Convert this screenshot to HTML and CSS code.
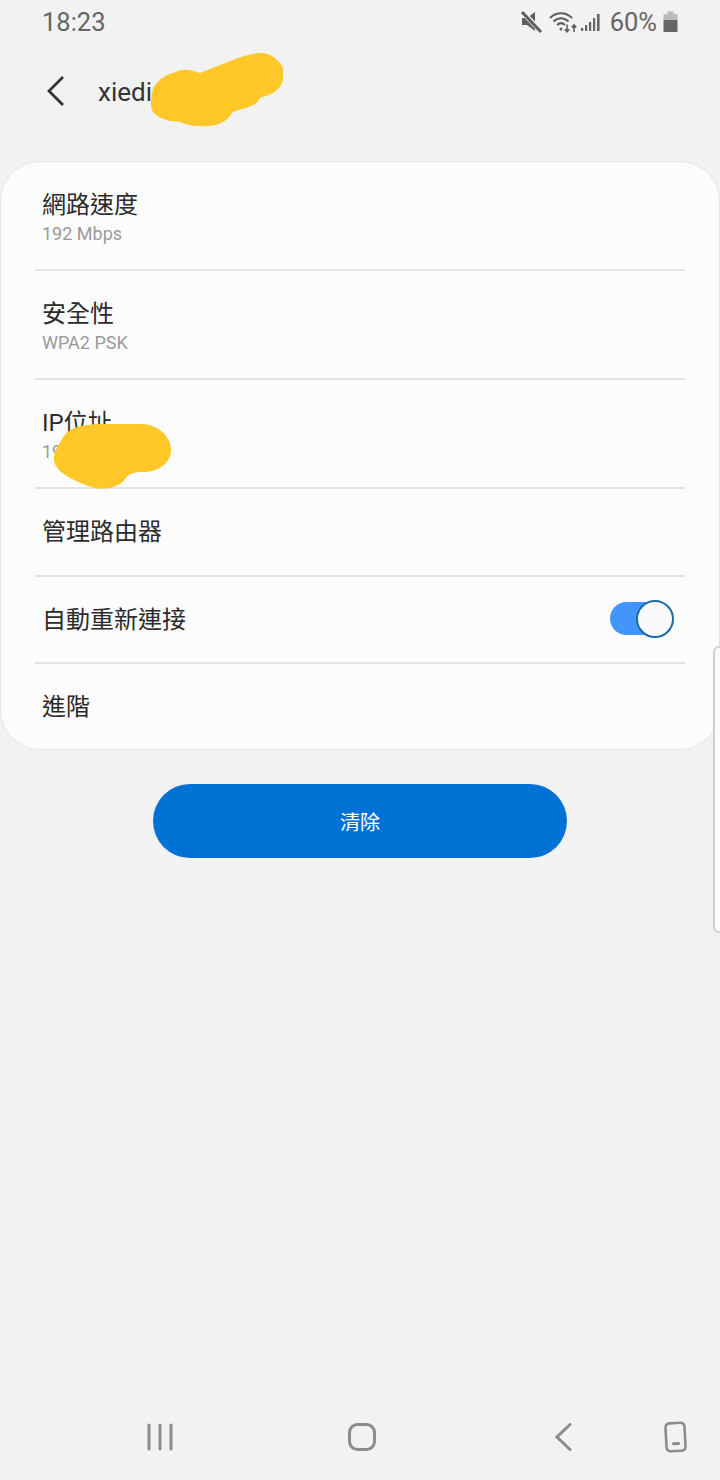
FILE: index.html
```html
<!DOCTYPE html>
<html lang="zh-Hant">
<head>
  <meta charset="UTF-8">
  <meta name="viewport" content="width=device-width, initial-scale=1.0">
  <title>Wi-Fi</title>
  <link rel="stylesheet" href="styles.css">
</head>
<body>
  <div class="phone">
    <div class="status-bar">
      <span class="clock">18:23</span>
      <div class="status-icons">
        <svg class="icon-mute" width="23" height="22" viewBox="0 0 23 22">
          <path d="M2 7h5l8-6v19l-8-6H2z" fill="#5f5f5f"/>
          <path d="M3 1.500l18 19" stroke="#f2f2f2" stroke-width="5"/>
          <path d="M2 1l19 20" stroke="#5f5f5f" stroke-width="3"/>
        </svg>
        <svg class="icon-wifi" width="29" height="24" viewBox="0 0 29 24" fill="none" stroke="#5f5f5f" stroke-width="2">
          <path d="M1 8C7 1.500 17 1.500 23 8"/>
          <path d="M4.500 11.500C9 7 15 7 19.500 11.500"/>
          <path d="M8 15c2.400-2.300 5.600-2.300 8 0"/>
          <path d="M18 14.500v7M15.800 19.300l2.200 2.400 2.200-2.400M25 22v-7M22.800 17.400l2.200-2.400 2.200 2.400" stroke-width="1.600"/>
          <circle cx="12" cy="19" r="1.500" fill="#5f5f5f" stroke="none"/>
        </svg>
        <svg class="icon-signal" width="20" height="20" viewBox="0 0 20 20" fill="#666">
          <rect x="0" y="16" width="2.200" height="3"/>
          <rect x="4" y="13" width="2.200" height="6"/>
          <rect x="8" y="10" width="2.200" height="9"/>
          <rect x="12" y="6" width="2.200" height="13"/>
          <rect x="16" y="2" width="2.600" height="17"/>
        </svg>
        <span class="battery-text">60%</span>
        <svg class="icon-battery" width="15" height="22" viewBox="0 0 15 22">
          <rect x="4.500" y="0.500" width="6" height="3" fill="#bbb"/>
          <rect x="0.500" y="3" width="14" height="6" fill="#bbb"/>
          <rect x="0.500" y="9" width="14" height="12" fill="#666"/>
        </svg>
      </div>
    </div>

    <div class="title-bar">
      <svg class="back-arrow" width="20" height="32" viewBox="0 0 20 32" fill="none">
        <path d="M17 2L3 16l14 14" stroke="#333" stroke-width="2.800"/>
      </svg>
      <span class="network-name">xiedin</span>
    </div>

    <div class="card">
      <div class="row row-tall">
        <div class="row-title">網路速度</div>
        <div class="row-sub">192 Mbps</div>
      </div>
      <div class="row row-tall">
        <div class="row-title">安全性</div>
        <div class="row-sub">WPA2 PSK</div>
      </div>
      <div class="row row-tall">
        <div class="row-title">IP位址</div>
        <div class="row-sub">19</div>
      </div>
      <div class="row">
        <div class="row-title">管理路由器</div>
      </div>
      <div class="row row-switch">
        <div class="row-title">自動重新連接</div>
        <div class="switch"><div class="knob"></div></div>
      </div>
      <div class="row row-last">
        <div class="row-title">進階</div>
      </div>
    </div>

    <div class="button-wrap">
      <button type="button" class="clear-btn">清除</button>
    </div>

    <div class="nav-bar">
      <svg width="28" height="28" viewBox="0 0 28 28" stroke="#8c8c8c" stroke-width="3" stroke-linecap="round">
        <path d="M3 2v24M14 2v24M25 2v24"/>
      </svg>
      <svg width="28" height="28" viewBox="0 0 28 28" fill="none" stroke="#8c8c8c" stroke-width="3">
        <rect x="1.500" y="1.500" width="25" height="25" rx="8"/>
      </svg>
      <svg width="18" height="28" viewBox="0 0 18 28" fill="none" stroke="#8c8c8c" stroke-width="3" stroke-linecap="round">
        <path d="M15 1.500L2 14l13 12.500"/>
      </svg>
      <svg width="24" height="32" viewBox="0 0 24 32" fill="none" stroke="#8c8c8c" stroke-width="2.600">
        <rect x="2" y="2" width="19" height="28" rx="4" transform="rotate(-3 12 16)"/>
        <path d="M9.500 22.800l5-.3" stroke-width="3" stroke-linecap="round"/>
      </svg>
    </div>

    <!-- scribbles drawn over the private details -->
    <svg class="scribble scribble-name" width="135" height="78" viewBox="0 0 135 78">
      <path d="M1 52C1 42 3 36 7 32 12 26 18 23 23 22 29 19 33 18 37 19 42 19 46 21 50 22L83 9C92 5 101 3 110 2 118 2 123 5 127 9 132 13 134 18 133 22 134 30 131 36 127 39 121 44 115 45 110 47 108 51 106 53 103 54 96 58 89 58 83 61 79 66 77 69 73 71 66 75 57 76 50 75 41 75 35 73 30 71 25 70 21 71 17 69 10 67 5 64 3 61 1 58 1 55 1 52Z" fill="#ffc727"/>
    </svg>
    <svg class="scribble scribble-ip" width="120" height="70" viewBox="0 0 120 70">
      <path d="M1 38C0 30 6 22 11 14 18 4 34 2 50 2H88C104 2 118 14 118 28 118 42 104 50 90 50 82 50 76 51 72 57 66 66 50 68 42 66 28 62 16 56 8 50 4 46 1 42 1 38Z" fill="#ffc727"/>
    </svg>

    <div class="side-handle"></div>
  </div>
</body>
</html>
```

FILE: styles.css
```css
/* General Reset */
* {
  box-sizing: border-box;
  margin: 0;
  padding: 0;
}

body {
  font-family: Roboto, "Noto Sans CJK TC", sans-serif;
  background-color: #f2f2f2;
}

.phone {
  position: relative;
  width: 720px;
  height: 1480px;
  overflow: hidden;
  display: flex;
  flex-direction: column;
  background-color: #f2f2f2;
}

.status-bar {
  height: 44px;
  padding: 0 42px 0 42px;
  display: flex;
  justify-content: space-between;
  align-items: center;
  color: #666;
}

.clock {
  font-size: 25.500px;
}

.status-icons {
  display: flex;
  align-items: center;
}

.icon-mute {
  margin-right: 6px;
}

.icon-wifi {
  margin-right: 3px;
}

.icon-signal {
  margin-right: 9px;
}

.battery-text {
  font-size: 25.500px;
  margin-right: 6px;
}

.title-bar {
  height: 117px;
  display: flex;
  align-items: flex-start;
}

.back-arrow {
  margin: 31px 0 0 46px;
}

.network-name {
  margin: 31px 0 0 32px;
  font-size: 26px;
  line-height: 34px;
  color: #333;
}

.card {
  height: 589px;
  background-color: #fcfcfc;
  border: 1px solid #e4e4e4;
  border-radius: 40px;
  display: flex;
  flex-direction: column;
}

.row {
  flex: none;
  height: 87.500px;
  margin: 0 34px;
  padding: 1px 7px 0;
  display: flex;
  flex-direction: column;
  justify-content: center;
  border-bottom: 2px solid #e3e3e3;
}

.row-last {
  flex: 1;
  border-bottom: none;
}

.row-tall {
  height: 109px;
  padding-top: 3px;
}

.row-title {
  font-size: 24px;
  line-height: 32px;
  color: #2b2b2b;
}

.row-sub {
  font-size: 18px;
  line-height: 24px;
  margin-top: 1px;
  color: #9a9a9a;
}

.row-switch {
  flex-direction: row;
  justify-content: space-between;
  align-items: center;
}

.switch {
  position: relative;
  width: 63px;
  height: 33px;
  margin: 0 5px 3px 0;
  border-radius: 17px;
  background-color: #4195fb;
}

.knob {
  position: absolute;
  top: -2px;
  right: -1px;
  width: 38px;
  height: 38px;
  border-radius: 50%;
  background-color: #fafafa;
  border: 2px solid #1c6aa8;
}

.button-wrap {
  margin-top: 34px;
  display: flex;
  justify-content: center;
}

.clear-btn {
  width: 414px;
  height: 74px;
  border: none;
  border-radius: 37px;
  background-color: #0072d6;
  color: white;
  font-family: inherit;
  font-size: 20px;
}

.nav-bar {
  position: absolute;
  left: 0;
  right: 0;
  bottom: 27px;
  height: 32px;
  display: flex;
  align-items: center;
}

.nav-bar svg:nth-child(1) {
  margin-left: 146px;
}

.nav-bar svg:nth-child(2) {
  margin-left: 174px;
}

.nav-bar svg:nth-child(3) {
  margin-left: 179px;
}

.nav-bar svg:nth-child(4) {
  margin-left: 91px;
}

.scribble {
  position: absolute;
}

.scribble-name {
  left: 150px;
  top: 51px;
}

.scribble-ip {
  left: 53px;
  top: 422px;
}

.side-handle {
  position: absolute;
  left: 713px;
  top: 646px;
  width: 12px;
  height: 287px;
  background-color: #fbfbfb;
  border: 2px solid #cfcfcf;
  border-radius: 8px;
}
```
